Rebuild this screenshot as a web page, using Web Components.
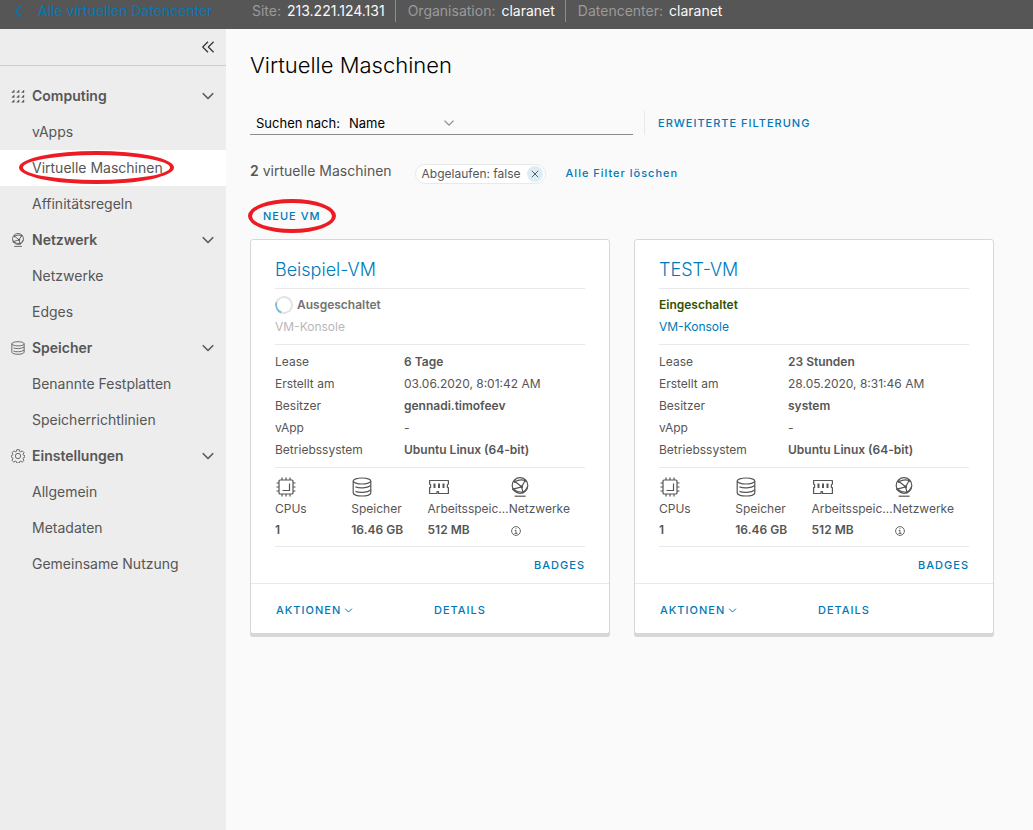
<!DOCTYPE html>
<html lang="de">
<head>
<meta charset="utf-8">
<meta name="viewport" content="width=device-width, initial-scale=1">
<title>Virtuelle Maschinen</title>
<style>
  body {
    margin: 0;
    background: #fafafa;
    color: #565656;
    font: 400 14px/24px Inter, "Open Sans", sans-serif;
    --link: #0079b8;
    --line: #e9e9e9;
    --mark: #ed1c24;
  }
</style>
</head>
<body>
<vdc-app>
  <vdc-header slot="header">
    <vdc-context label="Site:">213.221.124.131</vdc-context>
    <vdc-context label="Organisation:">claranet</vdc-context>
    <vdc-context label="Datencenter:">claranet</vdc-context>
  </vdc-header>

  <vdc-sidebar slot="sidebar">
    <vdc-nav-group label="Computing" icon="grid">
      <vdc-nav-item>vApps</vdc-nav-item>
      <vdc-nav-item active marked>Virtuelle Maschinen</vdc-nav-item>
      <vdc-nav-item>Affinitätsregeln</vdc-nav-item>
    </vdc-nav-group>
    <vdc-nav-group label="Netzwerk" icon="network">
      <vdc-nav-item>Netzwerke</vdc-nav-item>
      <vdc-nav-item>Edges</vdc-nav-item>
    </vdc-nav-group>
    <vdc-nav-group label="Speicher" icon="storage">
      <vdc-nav-item>Benannte Festplatten</vdc-nav-item>
      <vdc-nav-item>Speicherrichtlinien</vdc-nav-item>
    </vdc-nav-group>
    <vdc-nav-group label="Einstellungen" icon="cog">
      <vdc-nav-item>Allgemein</vdc-nav-item>
      <vdc-nav-item>Metadaten</vdc-nav-item>
      <vdc-nav-item>Gemeinsame Nutzung</vdc-nav-item>
    </vdc-nav-group>
  </vdc-sidebar>

  <vdc-page heading="Virtuelle Maschinen">
    <vdc-search slot="tools"></vdc-search>
    <vdc-filters slot="tools" count="2">
      <vdc-chip>Abgelaufen: false</vdc-chip>
    </vdc-filters>
    <vdc-action slot="actions" marked>NEUE VM</vdc-action>

    <vm-card name="Beispiel-VM" state="off" lease="6 Tage" created="03.06.2020, 8:01:42 AM"
      owner="gennadi.timofeev" vapp="-" os="Ubuntu Linux (64-bit)">
      <vm-metric slot="metrics" icon="cpu" label="CPUs">1</vm-metric>
      <vm-metric slot="metrics" icon="storage" label="Speicher">16.46 GB</vm-metric>
      <vm-metric slot="metrics" icon="memory" label="Arbeitsspeic…">512 MB</vm-metric>
      <vm-metric slot="metrics" icon="network" label="Netzwerke"><vdc-icon name="info" size="10"></vdc-icon></vm-metric>
    </vm-card>
    <vm-card name="TEST-VM" state="on" lease="23 Stunden" created="28.05.2020, 8:31:46 AM"
      owner="system" vapp="-" os="Ubuntu Linux (64-bit)">
      <vm-metric slot="metrics" icon="cpu" label="CPUs">1</vm-metric>
      <vm-metric slot="metrics" icon="storage" label="Speicher">16.46 GB</vm-metric>
      <vm-metric slot="metrics" icon="memory" label="Arbeitsspeic…">512 MB</vm-metric>
      <vm-metric slot="metrics" icon="network" label="Netzwerke"><vdc-icon name="info" size="10"></vdc-icon></vm-metric>
    </vm-card>
  </vdc-page>
</vdc-app>

<script>
const RESET = `
  * { box-sizing: border-box; }
  :host { box-sizing: border-box; }
  button, input, select { font: inherit; color: inherit; background: none; border: 0; margin: 0; padding: 0; }
  button { cursor: pointer; text-align: left; }
  a { color: inherit; text-decoration: none; }
  h1, h2, p { margin: 0; font-weight: inherit; }
`;

const define = (tag, render) => customElements.define(tag, class extends HTMLElement {
  connectedCallback() {
    if (this.shadowRoot) return;
    const root = this.attachShadow({ mode: 'open' });
    const template = document.createElement('template');
    template.innerHTML = render(name => this.getAttribute(name) ?? '', this);
    root.append(template.content.cloneNode(true));
  }
});

/* Icons share a 20-unit canvas and are stroked in the current colour. */
const ICONS = {
  'angle-down': '<path d="M2.5 6l7.5 7.500L17.500 6" stroke-width="2.200"/>',
  'angle-left': '<path d="M13 2l-8 8 8 8" stroke-width="2.200"/>',
  'double-left': '<path d="M10 2.500L2.500 10l7.500 7.500M18 2.500L10.500 10l7.500 7.500" stroke-width="1.700"/>',
  grid: [3, 10, 17].map(y => [3, 10, 17].map(x =>
    `<path d="M${x - 2} ${y + 2}h3.600v-3.600z" fill="currentColor" stroke-width=".5"/>`).join('')).join(''),
  network: '<circle cx="10" cy="8.500" r="7.800"/><path d="M4.600 19.200h11"/>' +
    '<path d="M5 4.500L11.600 9.800 15.200 3.500M3.200 12.200L11.600 9.800M11.600 9.800l1.300 5.400M5 4.500q5-2.700 10.200-1M3.200 12.200q4.800 3.400 9.700 3q3.200-1.600 4.500-5.200"/>' +
    '<g fill="currentColor" stroke="none"><circle cx="5" cy="4.700" r="1.200"/><circle cx="15.200" cy="3.800" r="1.200"/><circle cx="3.600" cy="12.200" r="1.200"/><circle cx="11.600" cy="9.800" r="1.500"/><circle cx="12.900" cy="15.200" r="1.200"/></g>',
  storage: '<path d="M1.200 4v12M18.800 4v12"/><ellipse cx="10" cy="4" rx="8.800" ry="3"/>' +
    '<path d="M1.200 16c1 4 16.600 4 17.600 0M3.500 9.900c3.500 1.500 11.500 1.500 15.300-1.400M3.500 14.400c3.500 1.500 11.500 1.500 15.300-1.400"/>',
  cog: '<circle cx="10" cy="10" r="3.800"/><path d="M8.200 1h3.600l.6 2.500 1.400.6 2.200-1.400 2.600 2.600-1.400 2.200.6 1.400 2 .5v2.400l-2 .6-.6 1.500 1.400 2.200-2.600 2.600-2.200-1.400-1.400.6-.6 2.100H8.200l-.6-2.100-1.400-.6L4 18.700l-2.600-2.600 1.400-2.200-.6-1.500L.5 11.800V9.400l1.700-.5.6-1.400L1.400 5.300 4 2.700l2.200 1.400 1.400-.6z"/>',
  cpu: '<rect x="3" y="3" width="14" height="14" rx="1"/><path d="M6.500 13.500h7v-7"/>' +
    '<path d="M6 .5V3M10 .5V3M14 .5V3M6 17v2.500M10 17v2.500M14 17v2.500M.5 6H3M.5 10H3M.5 14H3M17 6h2.500M17 10h2.500M17 14h2.500"/>',
  memory: '<path d="M.6 7.500V3.500h18.800v4M.6 7.500h1v3h-1v6H8v-2h1.500v2h9.900v-6h-1v-3h1"/>' +
    '<path d="M5.500 6.500v4.500M10 6.500v4.500M14.500 6.500v4.500" stroke-width="2"/>',
  info: '<circle cx="10" cy="10" r="8.800" stroke-width="1.800"/><path d="M10 4.500v2M7.500 9H10v5.500M7 14.800h6" stroke-width="1.800"/>',
  close: '<path d="M2 2l16 16M18 2L2 18" stroke-width="2.400"/>'
};

define('vdc-icon', attr => {
  const size = attr('size') || 20;
  return `<style>
    :host { display: block; flex: none; }
    svg { display: block; fill: none; stroke: currentColor; stroke-width: 1.200; stroke-linejoin: round; }
  </style>
  <svg width="${size}" height="${size}" viewBox="0 0 20 20" aria-hidden="true">${ICONS[attr('name')]}</svg>`;
});

/* Red ring that highlights the element it is placed in. */
define('vdc-ring', () => `<style>
  :host { position: absolute; pointer-events: none; border: 4px solid var(--mark); border-radius: 50%; box-sizing: border-box; }
</style>`);

define('vdc-app', () => `<style>${RESET}
  :host { display: flex; flex-direction: column; min-height: 100vh; }
  .body { display: flex; flex: 1; }
  main { flex: 1; min-width: 0; }
</style>
<slot name="header"></slot>
<div class="body"><slot name="sidebar"></slot><main><slot></slot></main></div>`);

define('vdc-header', () => `<style>${RESET}
  :host { display: flex; background: #565656; line-height: 22px; padding-bottom: 7px; white-space: nowrap; }
  a { display: flex; align-items: center; gap: 12px; width: 240px; padding-left: 12px; color: var(--link); }
</style>
<a href="#"><vdc-icon name="angle-left" size="14"></vdc-icon>Alle virtuellen Datencenter</a>
<slot></slot>`);

define('vdc-context', attr => `<style>${RESET}
  :host { display: flex; gap: 6px; padding: 0 10px 0 12px; color: #fafafa; }
  :host(:not(:last-of-type)) { border-right: 1px solid #8c8c8c; }
  .label { color: #9a9a9a; }
</style>
<span class="label">${attr('label')}</span><span><slot></slot></span>`);

define('vdc-sidebar', () => `<style>${RESET}
  :host { display: block; flex: none; width: 226px; background: #ededed; }
  .collapse { display: flex; justify-content: flex-end; padding: 11px 11px 11px 0; border-bottom: 1px solid #ccc; color: #333; }
  .collapse button { display: block; }
  nav { padding-top: 12px; }
</style>
<div class="collapse"><button type="button" aria-label="Menü einklappen"><vdc-icon name="double-left" size="14"></vdc-icon></button></div>
<nav aria-label="Hauptmenü"><slot></slot></nav>`);

define('vdc-nav-group', attr => `<style>${RESET}
  :host { display: block; }
  button { display: flex; align-items: center; gap: 7px; width: 100%; height: 36px; padding: 0 11px; font-weight: 600; }
  .label { flex: 1; }
</style>
<button type="button" aria-expanded="true"><vdc-icon name="${attr('icon')}" size="14"></vdc-icon><span class="label">${attr('label')}</span><vdc-icon name="angle-down" size="14"></vdc-icon></button>
<slot></slot>`);

define('vdc-nav-item', (attr, el) => `<style>${RESET}
  :host { display: block; position: relative; }
  :host([active]) { background: #fff; }
  a { display: block; padding: 6px 32px; }
  vdc-ring { inset: 1px 52px 2px 19px; }
</style>
<a href="#"><slot></slot></a>${el.hasAttribute('marked') ? '<vdc-ring></vdc-ring>' : ''}`);

define('vdc-page', attr => `<style>${RESET}
  :host { display: block; padding: 20px 24px; }
  h1 { font-size: 22px; line-height: 32px; font-weight: 300; color: #000; }
  .actions { display: flex; padding: 24px 0 15px 13px; }
  .cards { display: grid; grid-template-columns: repeat(auto-fill, 360px); gap: 24px; }
</style>
<h1>${attr('heading')}</h1>
<slot name="tools"></slot>
<div class="actions"><slot name="actions"></slot></div>
<div class="cards"><slot></slot></div>`);

define('vdc-search', () => `<style>${RESET}
  :host { display: flex; align-items: stretch; gap: 11px; margin-top: 30px; height: 24px; }
  .field { display: flex; align-items: center; width: 383px; padding-left: 6px; border-bottom: 1px solid #8c8c8c; color: #000; font-size: 13px; }
  .pick { display: flex; align-items: center; margin-left: 9px; }
  select { appearance: none; width: 108px; margin-right: -14px; padding-right: 16px; }
  .pick vdc-icon { color: #8c8c8c; pointer-events: none; }
  input { flex: 1; min-width: 0; margin-left: 8px; outline: 0; }
  .more { padding-left: 13px; border-left: 1px solid var(--line); display: flex; align-items: center; }
</style>
<div class="field">
  <label for="by">Suchen nach:</label>
  <span class="pick"><select id="by"><option>Name</option></select><vdc-icon name="angle-down" size="12"></vdc-icon></span>
  <input type="text" aria-label="Suchbegriff">
</div>
<div class="more"><vdc-action>ERWEITERTE FILTERUNG</vdc-action></div>`);

define('vdc-filters', attr => `<style>${RESET}
  :host { display: flex; align-items: center; gap: 20px; margin-top: 23px; }
  p { margin-right: 3px; }
  b { font-weight: 600; }
  vdc-action { margin-top: 4px; }
</style>
<p><b>${attr('count')}</b> virtuelle Maschinen</p>
<slot></slot>
<vdc-action>Alle Filter löschen</vdc-action>`);

define('vdc-chip', () => `<style>${RESET}
  :host { display: flex; align-items: center; gap: 6px; height: 20px; margin-top: 6px; padding: 0 2px 0 6px;
    background: #fff; border: 1px solid var(--line); border-radius: 10px; font-size: 12px; line-height: 18px; }
  button { display: grid; place-items: center; width: 16px; height: 16px; border-radius: 50%; background: #dcedf5; }
</style>
<slot></slot><button type="button" aria-label="Filter entfernen"><vdc-icon name="close" size="8"></vdc-icon></button>`);

define('vdc-action', (attr, el) => `<style>${RESET}
  :host { display: inline-flex; position: relative; color: var(--link); }
  button { display: inline-flex; align-items: center; gap: 3px; font-size: 11px; font-weight: 500; line-height: 16px; letter-spacing: 1px; }
  vdc-ring { inset: -9px -15px; }
</style>
<button type="button"><slot></slot></button>${el.hasAttribute('marked') ? '<vdc-ring></vdc-ring>' : ''}`);

define('vm-metric', attr => `<style>${RESET}
  :host { display: block; }
  .value { display: flex; height: 20px; font-weight: 600; line-height: 20px; }
  vdc-icon { margin: 0 0 1px 1px; }
  ::slotted(vdc-icon) { margin: 6px 0 0 2px; }
</style>
<vdc-icon name="${attr('icon')}" size="20"></vdc-icon>
<div>${attr('label')}</div>
<div class="value"><slot></slot></div>`);

define('vm-card', attr => {
  const on = attr('state') === 'on';
  return `<style>${RESET}
    :host { display: block; background: #fff; border: 1px solid #d7d7d7; border-radius: 3px; box-shadow: 0 3px 0 #d7d7d7;
      font-size: 12px; line-height: 22px; white-space: nowrap; }
    .content { padding: 12px 24px 0; }
    section { border-bottom: 1px solid var(--line); }
    h2 { padding: 4px 0; font-size: 18px; font-weight: 300; line-height: 28px; color: var(--link); border-bottom: 1px solid var(--line); }
    .power { padding: 5px 0 6px; }
    .state { display: flex; align-items: center; gap: 4px; font-weight: 600; color: ${on ? '#2f5400' : '#737373'}; }
    .spinner { width: 18px; height: 18px; border: 2px solid #e3e3e3; border-left-color: #79bbda; border-radius: 50%; transform: rotate(-25deg); }
    .power button { display: block; color: var(--link); }
    .power button:disabled { color: #b8b8b8; }
    .details { padding: 6px 0; }
    table { width: 100%; border-collapse: collapse; table-layout: fixed; }
    th, td { padding: 0; text-align: left; font-weight: 400; }
    th { width: 129px; }
    td.strong { font-weight: 600; }
    .metrics { display: grid; grid-template-columns: repeat(4, 1fr); padding: 9px 0 6px; }
    .badges { display: flex; justify-content: flex-end; padding: 10px 0; }
    footer { display: flex; border-top: 1px solid var(--line); padding: 18px 25px 15px; }
    footer > * { flex: 0 0 158px; }
  </style>
  <div class="content">
    <h2><a href="#">${attr('name')}</a></h2>
    <section class="power">
      <div class="state">${on ? 'Eingeschaltet' : '<span class="spinner"></span>Ausgeschaltet'}</div>
      <button type="button"${on ? '' : ' disabled'}>VM-Konsole</button>
    </section>
    <section class="details"><table>
      <tr><th scope="row">Lease</th><td class="strong">${attr('lease')}</td></tr>
      <tr><th scope="row">Erstellt am</th><td>${attr('created')}</td></tr>
      <tr><th scope="row">Besitzer</th><td class="strong">${attr('owner')}</td></tr>
      <tr><th scope="row">vApp</th><td>${attr('vapp')}</td></tr>
      <tr><th scope="row">Betriebssystem</th><td class="strong">${attr('os')}</td></tr>
    </table></section>
    <section class="metrics"><slot name="metrics"></slot></section>
    <div class="badges"><vdc-action>BADGES</vdc-action></div>
  </div>
  <footer>
    <vdc-action>AKTIONEN<vdc-icon name="angle-down" size="9"></vdc-icon></vdc-action>
    <vdc-action>DETAILS</vdc-action>
  </footer>`;
});
</script>
</body>
</html>
